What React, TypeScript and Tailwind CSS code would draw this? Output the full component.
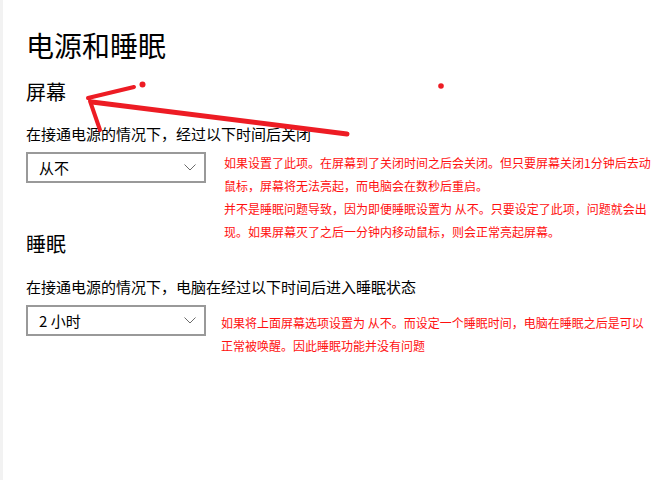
import React from "react";

const font = { fontFamily: '"Noto Sans CJK SC", "Noto Sans", sans-serif' };

function Chevron() {
  return (
    <svg width="12" height="7" viewBox="0 0 12 7" className="shrink-0">
      <path d="M0.5 0.5 L6 6 L11.5 0.5" fill="none" stroke="#6b6b6b" strokeWidth="1" />
    </svg>
  );
}

function Dropdown({ value }: { value: string }) {
  return (
    <div className="flex h-[31px] w-[180px] shrink-0 items-center justify-between border-2 border-[#999999] bg-white pl-[11px] pr-[8px]">
      <span className="text-[15px] leading-none text-black">{value}</span>
      <Chevron />
    </div>
  );
}

function Note({ lines, className }: { lines: string[]; className: string }) {
  return (
    <div className={"h-[31px] overflow-visible " + className}>
      {lines.map((l, i) => (
        <div key={i} className="whitespace-nowrap text-[12px] leading-[23px] text-[#ff1010]">
          {l}
        </div>
      ))}
    </div>
  );
}

export default function App() {
  return (
    <div className="relative flex h-[480px] w-[669px] overflow-hidden bg-white" style={font}>
      <div className="w-[3px] shrink-0 bg-[#f2f2f2]" />
      <div className="flex flex-col pl-[23px] text-black">
        <div className="mt-[27px] text-[28px] leading-[36px]">电源和睡眠</div>
        <div className="mt-[15px] text-[20px] leading-[28px]">屏幕</div>
        <div className="mt-[18px] text-[15px] leading-[20px]">在接通电源的情况下，经过以下时间后关闭</div>
        <div className="mt-[8px] flex items-start">
          <Dropdown value="从不" />
          <Note
            className="ml-[18px] mt-[-1px]"
            lines={[
              "如果设置了此项。在屏幕到了关闭时间之后会关闭。但只要屏幕关闭1分钟后去动",
              "鼠标，屏幕将无法亮起，而电脑会在数秒后重启。",
              "并不是睡眠问题导致，因为即便睡眠设置为 从不。只要设定了此项，问题就会出",
              "现。如果屏幕灭了之后一分钟内移动鼠标，则会正常亮起屏幕。",
            ]}
          />
        </div>
        <div className="mt-[47px] text-[20px] leading-[28px]">睡眠</div>
        <div className="mt-[19px] text-[15px] leading-[20px]">在接通电源的情况下，电脑在经过以下时间后进入睡眠状态</div>
        <div className="mt-[8px] flex items-start">
          <Dropdown value="2 小时" />
          <Note
            className="ml-[15px] mt-[6px]"
            lines={[
              "如果将上面屏幕选项设置为 从不。而设定一个睡眠时间，电脑在睡眠之后是可以",
              "正常被唤醒。因此睡眠功能并没有问题",
            ]}
          />
        </div>
      </div>
      <svg
        className="pointer-events-none absolute left-0 top-0"
        width="669"
        height="480"
        viewBox="0 0 669 480"
      >
        <g stroke="#ed1c24" strokeLinecap="round" fill="none">
          <path d="M347 134 L92 102" strokeWidth="5" />
          <path d="M88 98 L134 87" strokeWidth="4" />
          <path d="M90 101 L100 130" strokeWidth="4" />
        </g>
        <circle cx="142.5" cy="84.5" r="3" fill="#ed1c24" />
        <circle cx="441" cy="86" r="2.8" fill="#ed1c24" />
      </svg>
    </div>
  );
}
